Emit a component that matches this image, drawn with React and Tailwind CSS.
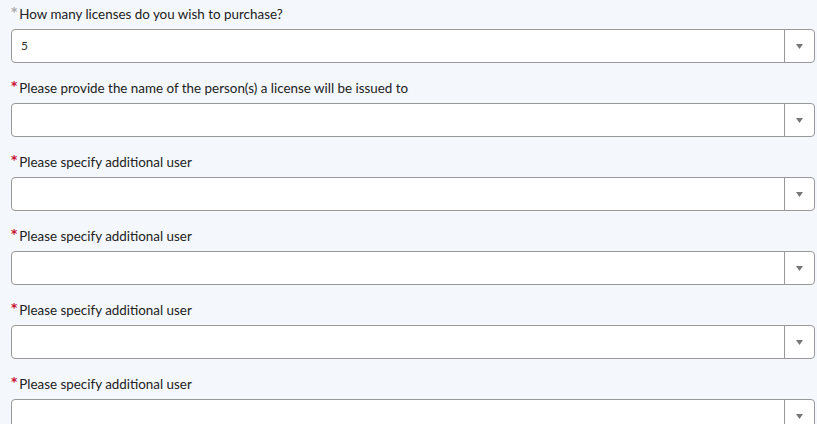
import React from 'react';

const fields = [
  { label: 'How many licenses do you wish to purchase?', value: '5', required: false },
  { label: 'Please provide the name of the person(s) a license will be issued to', value: '', required: true },
  { label: 'Please specify additional user', value: '', required: true },
  { label: 'Please specify additional user', value: '', required: true },
  { label: 'Please specify additional user', value: '', required: true },
  { label: 'Please specify additional user', value: '', required: true },
];

const SelectField = ({ label, value, required }) => (
  <div className="flex flex-col">
    <label className="flex items-start h-[29px] pt-[5px] text-[13.4px] leading-[18px] text-[#222]">
      <span
        className={`text-[12px] leading-[14px] font-bold mr-[2px] ${required ? 'text-[#c8102e]' : 'text-[#aaa]'}`}
        style={{ fontFamily: '"DejaVu Sans", sans-serif' }}
      >
        *
      </span>
      {label}
    </label>
    <div className="flex h-[34px] bg-white border border-[#999] rounded-[4px] mb-[11px]">
      <div className="flex-1 flex items-center px-[9px] text-[12px] text-[#333]">{value}</div>
      <div className="w-[30px] flex items-center justify-center border-l border-[#999]">
        <svg width="7" height="5" viewBox="0 0 7 5">
          <path d="M0 0 L7 0 L3.5 5 Z" fill="#777" />
        </svg>
      </div>
    </div>
  </div>
);

export default function App() {
  return (
    <div
      className="min-h-[424px] bg-[#f4f7fb] pl-[11px] pr-[2px] overflow-hidden"
      style={{ fontFamily: '"Source Sans Pro", Lato, "Noto Sans", sans-serif' }}
    >
      {fields.map((f, i) => (
        <SelectField key={i} {...f} />
      ))}
    </div>
  );
}
